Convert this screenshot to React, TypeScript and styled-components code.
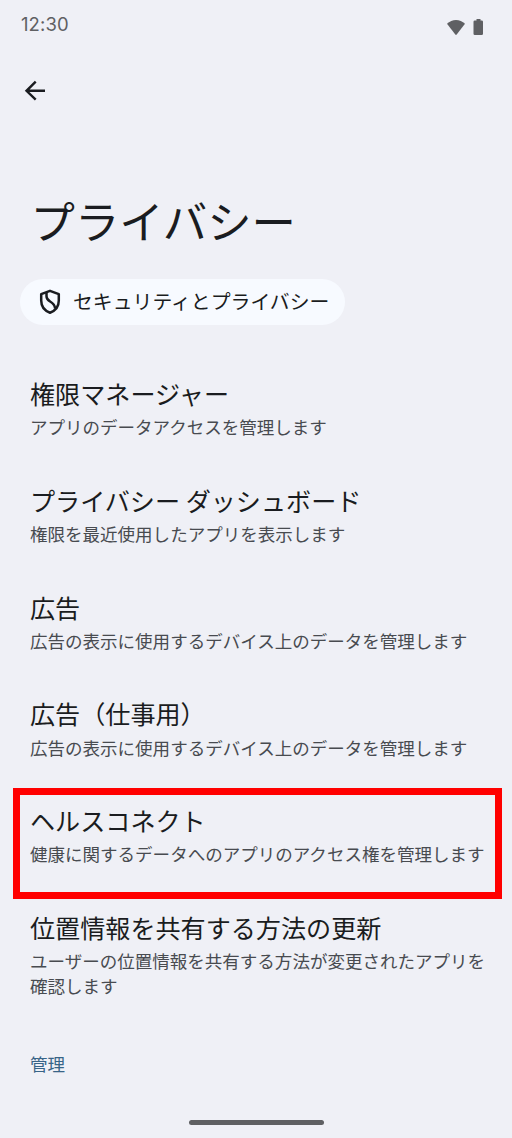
import React from 'react';
import styled, { createGlobalStyle } from 'styled-components';

const Global = createGlobalStyle`
  * { box-sizing: border-box; }
  body { margin: 0; background: #eff0f6; }
`;

const Screen = styled.main`
  width: 512px;
  height: 1138px;
  overflow: hidden;
  display: flex;
  flex-direction: column;
  background: #eff0f6;
  color: #1a1c20;
  font-family: "Noto Sans CJK JP", sans-serif;
`;

const StatusBar = styled.header`
  height: 48px;
  flex: none;
  display: flex;
  justify-content: space-between;
  padding: 12px 28px 0 21px;
  color: #5f6063;
`;

const Clock = styled.span`
  font: 400 18.5px/24px Inter, sans-serif;
  letter-spacing: 0.1px;
`;

const StatusIcons = styled.div`
  display: flex;
  gap: 6px;
  padding-top: 6px;
`;

const AppBar = styled.nav`
  height: 147px;
  flex: none;
  padding: 32px 0 0 24px;
`;

const BackButton = styled.button`
  display: block;
  border: 0;
  padding: 0;
  background: none;
  color: #1a1c20;
`;

const Title = styled.h1`
  margin: 0 0 0 30.5px;
  height: 84px;
  flex: none;
  font-size: 44.4px;
  line-height: 49px;
  font-weight: 400;
  white-space: nowrap;
`;

const Chip = styled.button`
  flex: none;
  align-self: flex-start;
  display: flex;
  align-items: center;
  gap: 12px;
  margin-left: 20px;
  width: 325px;
  height: 46px;
  padding: 0 0 0 19px;
  border: 0;
  border-radius: 23px;
  background: #f7faff;
  color: #1a1c20;
  font: 400 19.85px/28px "Noto Sans CJK JP", sans-serif;
  white-space: nowrap;
`;

const ChipLabel = styled.span`
  padding-bottom: 2px;
`;

const List = styled.section`
  display: flex;
  flex-direction: column;
  padding: 36.2px 10px 0 13px;
`;

const Item = styled.article<{ $marked?: boolean; $tall?: boolean }>`
  flex: none;
  height: ${(p) => (p.$tall ? 133 : 106.7)}px;
  padding: 13px 0 0 17px;
  ${(p) => p.$marked && `
    height: 110.9px;
    margin-bottom: -4.2px;
    outline: 7px solid #ff0000;
    outline-offset: -7px;
  `}
`;

const ItemTitle = styled.h2`
  margin: 0;
  font-size: 25.1px;
  line-height: 38px;
  font-weight: 400;
  white-space: nowrap;
`;

const Summary = styled.p`
  margin: 2.3px 0 0;
  font-size: 17.52px;
  line-height: 25.4px;
  color: #484b50;
  white-space: pre;
`;

const Category = styled.h3`
  margin: 23px 0 0 30px;
  font-size: 17.5px;
  line-height: 26px;
  font-weight: 400;
  color: #386487;
`;

const HomeHandle = styled.div`
  width: 135px;
  height: 5px;
  margin: auto auto 13px 188.5px;
  border-radius: 3px;
  background: #5f6063;
`;

const items = [
  { title: '権限マネージャー', summary: 'アプリのデータアクセスを管理します' },
  { title: 'プライバシー ダッシュボード', summary: '権限を最近使用したアプリを表示します' },
  { title: '広告', summary: '広告の表示に使用するデバイス上のデータを管理します' },
  { title: '広告（仕事用）', summary: '広告の表示に使用するデバイス上のデータを管理します' },
  { title: 'ヘルスコネクト', summary: '健康に関するデータへのアプリのアクセス権を管理します', marked: true },
  { title: '位置情報を共有する方法の更新', summary: 'ユーザーの位置情報を共有する方法が変更されたアプリを\n確認します', tall: true },
];

export default function App() {
  return (
    <Screen>
      <Global />
      <StatusBar>
        <Clock>12:30</Clock>
        <StatusIcons>
          <svg width="20" height="18" viewBox="0 0 20 18" fill="currentColor">
            <path d="M0 5.700C5 .6 13 .6 18 5.700L9.700 16.600Q9 17.400 8.300 16.600Z" />
          </svg>
          <svg width="11" height="18" viewBox="0 0 11 18" fill="currentColor">
            <path d="M3.500 1h4v1.500h1.200q1.300 0 1.300 1.300v11.900q0 1.300-1.300 1.300H1.800Q.5 17 .5 15.700V3.800Q.5 2.500 1.800 2.500h1.700z" />
          </svg>
        </StatusIcons>
      </StatusBar>
      <AppBar>
        <BackButton aria-label="戻る">
          <svg width="22" height="22" viewBox="0 0 22 22" fill="none" stroke="currentColor" strokeWidth="2.400">
            <path d="M21 10.800H2.500M11.700 1.700 2.500 10.800l9.200 8.900" />
          </svg>
        </BackButton>
      </AppBar>
      <Title>プライバシー</Title>
      <Chip>
        <svg width="22" height="26" viewBox="0 0 22 26" fill="none" stroke="currentColor" strokeWidth="2.500" strokeLinejoin="round">
          <path d="M11 1.800 2.200 5.100v6.500c0 6 3.600 10.300 8.800 12.100 5.200-1.800 8.800-6.100 8.800-12.100V5.100z" />
          <path d="M7.500 3.500v3.800c0 2.600 1.400 3.900 3.600 5.200 2.900 1.700 4.800 3.600 5 7" />
        </svg>
        <ChipLabel>セキュリティとプライバシー</ChipLabel>
      </Chip>
      <List>
        {items.map((item) => (
          <Item key={item.title} $marked={item.marked} $tall={item.tall}>
            <ItemTitle>{item.title}</ItemTitle>
            <Summary>{item.summary}</Summary>
          </Item>
        ))}
      </List>
      <Category>管理</Category>
      <HomeHandle />
    </Screen>
  );
}
